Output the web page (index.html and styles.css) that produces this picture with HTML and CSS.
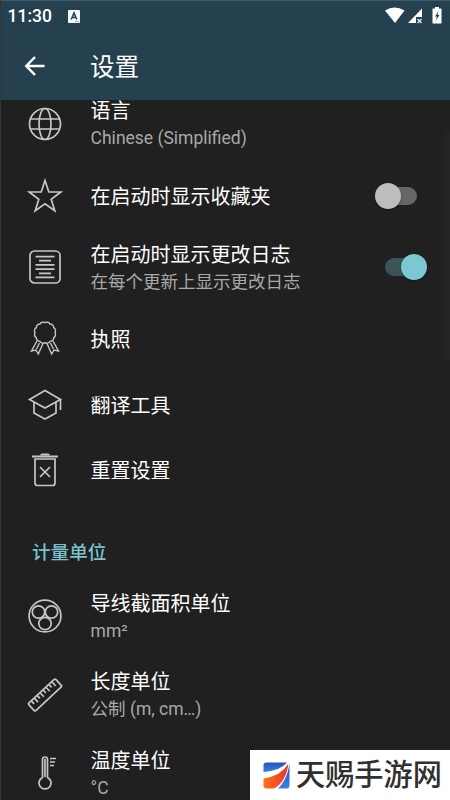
FILE: index.html
```
<!DOCTYPE html>
<html lang="zh-CN">
<head>
<meta charset="utf-8">
<title>设置</title>
<link rel="stylesheet" href="styles.css">
</head>
<body>
<div class="screen">
  <header class="top">
    <div class="status">
      <span class="clock">11:30</span>
      <svg class="note" width="12" height="13" viewBox="0 0 12 13"><rect width="12" height="13" rx="1" fill="#f4f8fa"/><path d="M3.2 9.5 6 3l2.800 6.500M4.200 7.500h3.600" fill="none" stroke="#25414f" stroke-width="1.500"/><path d="M7 11.500h4" stroke="#93a5ae" stroke-width=".8"/></svg>
      <svg class="signals" width="57" height="18" viewBox="0 0 57 18"><path d="M0 3.500Q9.500-2.500 19.500 3.500L10 16Z" fill="#fff"/><path d="M37 1.500V10h-6v6h-8Z" fill="#fff"/><path d="m32.500 12 4 4m0-4-4 4" stroke="#dce8ee" stroke-width="1.400"/><path d="M48 1.500h2V0h4v1.500h2q.5 0 .5.500v14q0 .5-.5.500h-8q-.5 0-.5-.5V2q0-.5.500-.5Z" fill="#fff"/><path d="M53.500 4 50 9.500h2l-1.500 4.500 4-6h-2Z" fill="#25414f"/></svg>
    </div>
    <div class="bar">
      <svg class="back" width="22" height="20" viewBox="0 0 22 20"><path d="M20.500 10H2.500M11 1 2.300 10l8.700 9" fill="none" stroke="#fff" stroke-width="2.500"/></svg>
      <h1>设置</h1>
    </div>
  </header>
  <main class="viewport">
    <div class="list">
      <div class="row two">
        <svg class="icon" viewBox="0 0 36 36"><circle cx="18" cy="18" r="15.500"/><ellipse cx="18" cy="18" rx="6" ry="15.500"/><path d="M3.500 13h29M3.500 23h29"/></svg>
        <div class="text"><div class="title">语言</div><div class="sub">Chinese (Simplified)</div></div>
      </div>
      <div class="row">
        <svg class="icon" viewBox="0 0 36 36"><path d="m18 2.500 3.800 11.400 12 .1-9.600 7.200 3.600 11.600-9.800-7-9.800 7 3.600-11.600L2.200 14l12-.1Z"/></svg>
        <div class="text"><div class="title">在启动时显示收藏夹</div></div>
        <div class="switch"><i class="knob"></i></div>
      </div>
      <div class="row two">
        <svg class="icon" viewBox="0 0 36 36"><rect x="3" y="2" width="30" height="32" rx="4.500"/><path d="M8.500 7.700h19M12 11.700h12M8.500 15.900h19M8.500 20.100h19M12 24.300h12M8.500 28.300h19"/></svg>
        <div class="text"><div class="title">在启动时显示更改日志</div><div class="sub">在每个更新上显示更改日志</div></div>
        <div class="switch on"><i class="knob"></i></div>
      </div>
      <div class="row">
        <svg class="icon thin" viewBox="0 0 36 36"><path d="M28 11.700A3.600 3.600 0 0 1 26.700 16.700 3.600 3.600 0 0 1 23 20.400 3.600 3.600 0 0 1 18 21.700 3.600 3.600 0 0 1 13 20.400 3.600 3.600 0 0 1 9.300 16.700 3.600 3.600 0 0 1 8 11.700 3.600 3.600 0 0 1 9.300 6.700 3.600 3.600 0 0 1 13 3 3.600 3.600 0 0 1 18 1.700 3.600 3.600 0 0 1 23 3 3.600 3.600 0 0 1 26.700 6.700 3.600 3.600 0 0 1 28 11.700Z"/><path d="M10 20 4.500 30l4.500-1 2.300 4L16 22.500M26 20l5.500 10-4.500-1-2.300 4L20 22.500M12.500 22l-3 6M23.500 22l3 6"/></svg>
        <div class="text"><div class="title">执照</div></div>
      </div>
      <div class="row">
        <svg class="icon" viewBox="0 0 36 36"><path d="M2.500 12.500 18 3.500l15.500 9L18 21ZM7 15.500V26l11 6 11-6V15.500M33.500 12.500v10.500"/></svg>
        <div class="text"><div class="title">翻译工具</div></div>
      </div>
      <div class="row">
        <svg class="icon" viewBox="0 0 36 36"><path d="M8 7v24q0 2.500 2.500 2.500h15q2.500 0 2.500-2.500V7ZM13 15l10 10m0-10L13 25"/><path d="M5 4.500h26" stroke-width="2"/><path d="M13 3.500q.5-2 2-2h6q1.500 0 2 2Z" fill="#c6c6c6" stroke="none"/></svg>
        <div class="text"><div class="title">重置设置</div></div>
      </div>
      <h2>计量单位</h2>
      <div class="row two">
        <svg class="icon" viewBox="0 0 36 36"><circle cx="18" cy="18" r="15.900"/><circle cx="11.500" cy="14" r="6.200"/><circle cx="24.500" cy="14" r="6.200"/><circle cx="18" cy="25.500" r="6.200"/></svg>
        <div class="text"><div class="title">导线截面积单位</div><div class="sub">mm²</div></div>
      </div>
      <div class="row two">
        <svg class="icon" viewBox="0 0 36 36"><g transform="rotate(-43 18 18)"><rect x="-.5" y="12.800" width="37" height="10.400" rx="1.500"/><path d="M4 13v4M8 13v5.500M12 13v4M16 13v5.500M20 13v4M24 13v5.500M28 13v4M32 13v5.500"/></g></svg>
        <div class="text"><div class="title">长度单位</div><div class="sub">公制 (m, cm…)</div></div>
      </div>
      <div class="row two">
        <svg class="icon" viewBox="0 0 36 36"><path d="M15.500 22.500V4.500q0-2.500 2.500-2.500t2.500 2.500v18a6 6 0 1 1-5 0ZM18 4v18M23 3.500h6M23 7h5M23 10.500h4"/></svg>
        <div class="text"><div class="title">温度单位</div><div class="sub">°C</div></div>
      </div>
    </div>
  </main>
  <div class="scrollbar"></div>
  <div class="mark">
    <svg width="27" height="27" viewBox="0 0 27 27"><defs><linearGradient id="o" x1="0" y1="0" x2="1" y2="0"><stop stop-color="#ff7417"/><stop offset="1" stop-color="#ed302e"/></linearGradient><linearGradient id="b" x1="0" y1="0" x2="0" y2="1"><stop stop-color="#2451b5"/><stop offset="1" stop-color="#4180e4"/></linearGradient></defs><path d="M3.500.5H24Q17 9 .5 10V3.500q0-3 3-3Z" fill="url(#b)"/><path d="M.5 16.500Q18 14 25.500 1.500 23 20 11 26.500H3.500q-3 0-3-3Z" fill="url(#o)"/><path d="M26.500 2v21.500q0 3-3 3H15Q24 18 26.500 2Z" fill="url(#b)"/></svg>
    <span>天赐手游网</span>
  </div>
</div>
</body>
</html>
```
FILE: styles.css
```
* { box-sizing: border-box; }
body {
  margin: 0;
  background: #202020;
  color: #fff;
  font-family: Roboto, "Noto Sans CJK SC", sans-serif;
}
.screen {
  position: relative;
  display: flex;
  flex-direction: column;
  width: 450px;
  height: 800px;
  overflow: hidden;
  border-left: 1px solid #343638;
}
.top {
  flex: none;
  height: 100px;
  background: #25414f;
  border-top: 1px solid #3c5c6c;
}
.status {
  display: flex;
  align-items: center;
  height: 30px;
  padding: 0 8px 0 6.500px;
}
.clock {
  width: 60px;
  padding-top: 1px;
  font-size: 17.5px;
  font-weight: 500;
  line-height: 29px;
}
.signals { margin-left: auto; }
.bar {
  display: flex;
  align-items: center;
  height: 69px;
  padding-left: 23px;
}
.back { margin-right: 44px; }
h1 {
  margin: 0;
  padding-top: 4px;
  font-size: 24.5px;
  font-weight: 400;
  line-height: 36px;
}
.viewport {
  flex: 1;
  min-height: 0;
  overflow: hidden;
}
.list { margin-top: -15.500px; }
.row {
  display: flex;
  align-items: center;
  height: 65.300px;
  padding: 0 22px 0 25.600px;
}
.two { height: 78.400px; }
.icon {
  flex: none;
  width: 36px;
  height: 36px;
  margin-right: 28px;
  fill: none;
  stroke: #c6c6c6;
  stroke-width: 1.700;
}
.thin { stroke-width: 1.400; }
.text {
  flex: 1;
  padding-top: 2px;
}
.title {
  font-size: 20px;
  line-height: 28px;
  white-space: nowrap;
}
.sub {
  color: #a9a9a9;
  font-size: 17.500px;
  line-height: 27px;
  white-space: nowrap;
}
h2 {
  margin: 0;
  padding: 13px 0 0 31px;
  height: 74.800px;
  color: #78c3ce;
  font-size: 18.600px;
  font-weight: 500;
  line-height: 76px;
}
.switch {
  display: flex;
  align-items: center;
  width: 36px;
  height: 18px;
  margin-right: 11px;
  border-radius: 9px;
  background: #666;
}
.knob {
  width: 26px;
  height: 26px;
  margin-left: -6px;
  border-radius: 50%;
  background: #bdbdbd;
  box-shadow: 0 1px 2px #0006;
}
.on {
  justify-content: flex-end;
  margin-right: 7px;
  background: #3c5357;
}
.on .knob {
  margin: 0 -6px 0 0;
  background: #7bc8d3;
}
.scrollbar {
  position: absolute;
  top: 130px;
  right: 0;
  width: 5px;
  height: 230px;
  background: #242424;
}
.mark {
  position: absolute;
  right: 0;
  bottom: 0;
  display: flex;
  align-items: center;
  gap: 6px;
  width: 200px;
  height: 50px;
  padding-left: 13px;
  background: #fff;
  color: #303030;
  font-family: "Noto Sans CJK SC", sans-serif;
  font-size: 29.200px;
  font-weight: 500;
  white-space: nowrap;
}
.mark span {
  margin-top: -7px;
}
```
